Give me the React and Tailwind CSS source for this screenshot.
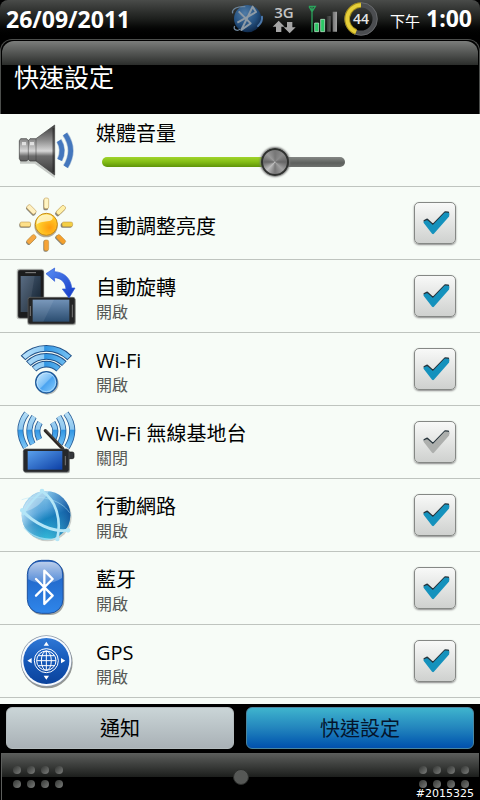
import { useState } from 'react';

function SpeakerIcon() {
  return (
    <svg viewBox="0 0 192 216" className="h-18 w-16" aria-hidden="true">
      <defs>
        <linearGradient id="cone" x1="0" y1="0" x2="0" y2="1">
          <stop offset="0" stopColor="#3c3c3c" />
          <stop offset="0.3" stopColor="#8b8b8b" />
          <stop offset="0.52" stopColor="#d8d8d8" />
          <stop offset="0.62" stopColor="#6c6c6c" />
          <stop offset="1" stopColor="#383838" />
        </linearGradient>
      </defs>
      <path d="M16 80L60 80L122 40V192L62 149H18Z" fill="#000" opacity="0.2" />
      <path d="M20 74H38L43 80L48 74H66L122 33V183L66 141H48L43 136L38 141H20L16 134V80Z" fill="url(#cone)" stroke="#3a3a3a" strokeWidth="2" />
      <path d="M24 84H36V94H24ZM48 84H60V94H48Z" fill="#f4f4f4" opacity="0.75" />
      <path d="M43 80V136M66 75V141" stroke="#333" strokeWidth="2" opacity="0.7" />
      <path d="M118 42V174" stroke="#222" strokeWidth="5" opacity="0.6" />
      <g fill="none">
        <path d="M135 80Q152 108 137 138" stroke="#a9bfd8" strokeWidth="18" />
        <path d="M153 60Q186 108 155 158" stroke="#a9bfd8" strokeWidth="18" />
        <path d="M135 80Q152 108 137 138" stroke="#4477bd" strokeWidth="14" />
        <path d="M153 60Q186 108 155 158" stroke="#4477bd" strokeWidth="14" />
      </g>
    </svg>
  );
}

const RAYS = [
  { x: 97, y: 50, turn: 0, fill: '#fff5c4' },
  { x: 140, y: 70, turn: 45, fill: '#fff0a8' },
  { x: 159, y: 112, turn: 90, fill: '#f4cf45' },
  { x: 140, y: 156, turn: 135, fill: '#f5a02c' },
  { x: 97, y: 174, turn: 180, fill: '#f6a335' },
  { x: 53, y: 156, turn: 225, fill: '#f5a743' },
  { x: 35, y: 112, turn: 270, fill: '#fde08a' },
  { x: 53, y: 68, turn: 315, fill: '#fff0c0' },
];

function SunIcon() {
  return (
    <svg viewBox="0 0 192 216" className="h-18 w-16" aria-hidden="true">
      <defs>
        <radialGradient id="sun" cx="0.65" cy="0.65" r="0.75">
          <stop offset="0" stopColor="#ff9c0c" />
          <stop offset="0.6" stopColor="#ffc827" />
          <stop offset="1" stopColor="#ffe95c" />
        </radialGradient>
      </defs>
      {RAYS.map((ray) => (
        <g key={ray.turn}>
          <rect x={ray.x - 9} y={ray.y - 14} width="14" height="34" rx="5" fill="#4b4336" opacity="0.65" transform={`rotate(${ray.turn} ${ray.x - 2} ${ray.y + 3})`} />
          <rect x={ray.x - 7} y={ray.y - 17} width="14" height="32" rx="5" fill={ray.fill} stroke="#b48a3d" strokeWidth="1.5" transform={`rotate(${ray.turn} ${ray.x} ${ray.y})`} />
        </g>
      ))}
      <circle cx="96" cy="116" r="35" fill="#6b5530" opacity="0.5" />
      <circle cx="97" cy="112" r="33" fill="url(#sun)" stroke="#c88a16" strokeWidth="3" />
      <path d="M68 112C66 88 86 80 104 83C120 86 120 98 106 102C90 104 80 104 68 112Z" fill="#fffbe0" opacity="0.75" />
    </svg>
  );
}

function RotateIcon() {
  return (
    <svg viewBox="0 0 192 216" className="h-18 w-16" aria-hidden="true">
      <defs>
        <linearGradient id="screen" x1="0" y1="0" x2="0" y2="1">
          <stop offset="0" stopColor="#6f90b6" />
          <stop offset="1" stopColor="#2b4d70" />
        </linearGradient>
        <linearGradient id="arrow" x1="0" y1="0" x2="1" y2="1">
          <stop offset="0" stopColor="#5a8ff5" />
          <stop offset="1" stopColor="#1238c4" />
        </linearGradient>
        <linearGradient id="darkscreen" x1="0" y1="0" x2="1" y2="1">
          <stop offset="0" stopColor="#4b6079" />
          <stop offset="1" stopColor="#0f1c29" />
        </linearGradient>
      </defs>
      <rect x="8" y="26" width="82" height="152" rx="6" fill="#000" opacity="0.2" />
      <rect x="12" y="30" width="77" height="144" rx="6" fill="#1b1c1d" stroke="#555" strokeWidth="2" />
      <rect x="20" y="48" width="60" height="108" fill="url(#darkscreen)" />
      <path d="M34 38H66" stroke="#888" strokeWidth="3" />
      <path d="M20 48H62L44 156H20Z" fill="#fff" opacity="0.08" />
      <rect x="40" y="116" width="146" height="80" rx="6" fill="#000" opacity="0.25" />
      <rect x="42" y="112" width="141" height="80" rx="6" fill="#242526" stroke="#6b6b68" strokeWidth="2" />
      <rect x="56" y="119" width="110" height="66" fill="url(#screen)" />
      <path d="M56 119H120L88 185H56Z" fill="#fff" opacity="0.08" />
      <path d="M49 138V168M175 134V172" stroke="#777" strokeWidth="3" />
      <path d="M96 41L122 24L121 35C150 36 171 56 173 84H183L165 114L145 87H156C154 67 142 54 121 53L122 64Z" fill="url(#arrow)" stroke="#2c58d4" strokeWidth="2" />
    </svg>
  );
}

function WifiIcon() {
  const arcs = ['M27 75A99 99 0 0 1 167 75', 'M43 92A77 77 0 0 1 151 92', 'M60 108A54 54 0 0 1 134 108'];
  return (
    <svg viewBox="0 0 192 216" className="h-18 w-16" aria-hidden="true">
      <defs>
        <linearGradient id="wave" gradientUnits="userSpaceOnUse" x1="20" y1="0" x2="170" y2="0">
          <stop offset="0" stopColor="#b9e2fb" />
          <stop offset="0.46" stopColor="#8fcbf5" />
          <stop offset="0.48" stopColor="#2f95e3" />
          <stop offset="1" stopColor="#79c4f4" />
        </linearGradient>
        <linearGradient id="ball" x1="0" y1="0" x2="1" y2="1">
          <stop offset="0" stopColor="#d5efff" />
          <stop offset="0.48" stopColor="#7cc0f7" />
          <stop offset="0.52" stopColor="#4aa3f0" />
          <stop offset="1" stopColor="#8fd3ff" />
        </linearGradient>
      </defs>
      <g fill="none">
        {arcs.map((d) => (
          <g key={d}>
            <path d={d} stroke="#1f4f86" strokeWidth="20" />
            <path d={d} pathLength="100" strokeDasharray="96 10" strokeDashoffset="-2" stroke="url(#wave)" strokeWidth="14" />
          </g>
        ))}
      </g>
      <circle cx="100" cy="151" r="34" fill="#000" opacity="0.25" />
      <circle cx="97" cy="148" r="32" fill="url(#ball)" stroke="#1f5a9a" strokeWidth="4" />
      <circle cx="97" cy="148" r="28" fill="none" stroke="#d3edff" strokeWidth="2" opacity="0.8" />
    </svg>
  );
}

function HotspotIcon() {
  const left = ['M38 22Q2 70 35 124', 'M60 32Q34 72 56 114', 'M78 50Q63 74 76 100'];
  return (
    <svg viewBox="0 0 192 216" className="h-18 w-16" aria-hidden="true">
      <defs>
        <linearGradient id="signal" gradientUnits="userSpaceOnUse" x1="0" y1="20" x2="0" y2="124">
          <stop offset="0" stopColor="#b5def6" />
          <stop offset="0.48" stopColor="#8cc6ef" />
          <stop offset="0.5" stopColor="#3096e4" />
          <stop offset="1" stopColor="#7cc5f5" />
        </linearGradient>
        <linearGradient id="hotscreen" x1="0" y1="0" x2="1" y2="1">
          <stop offset="0" stopColor="#5aa0ec" />
          <stop offset="1" stopColor="#0c3fa6" />
        </linearGradient>
      </defs>
      {['', 'matrix(-1 0 0 1 194 0)'].map((flip) => (
        <g key={flip} transform={flip || undefined} fill="none">
          {left.map((d) => (
            <g key={d}>
              <path d={d} stroke="#2a5f98" strokeWidth="18" />
              <path d={d} stroke="url(#signal)" strokeWidth="13" />
            </g>
          ))}
        </g>
      ))}
      <rect x="30" y="134" width="138" height="68" rx="7" fill="#000" opacity="0.3" />
      <rect x="154" y="138" width="26" height="20" rx="5" fill="#33363a" stroke="#111" strokeWidth="2" />
      <path d="M94 74L146 128" stroke="#2b2622" strokeWidth="10" strokeLinecap="round" />
      <path d="M96 73L148 126" stroke="#7b7670" strokeWidth="2" />
      <rect x="28" y="129" width="137" height="69" rx="7" fill="#26282b" stroke="#55585b" strokeWidth="2" />
      <rect x="41" y="135" width="104" height="56" fill="url(#hotscreen)" />
      <path d="M154 150V178" stroke="#777" strokeWidth="3" />
    </svg>
  );
}

function GlobeIcon() {
  return (
    <svg viewBox="0 0 192 216" className="h-18 w-16" aria-hidden="true">
      <defs>
        <linearGradient id="globe" x1="0.2" y1="0" x2="0.6" y2="1">
          <stop offset="0" stopColor="#a9dcf2" />
          <stop offset="0.42" stopColor="#5ba9dc" />
          <stop offset="0.6" stopColor="#1583bd" />
          <stop offset="1" stopColor="#39c6dd" />
        </linearGradient>
        <linearGradient id="globeshade" x1="0" y1="0" x2="1" y2="0">
          <stop offset="0" stopColor="#dff6ff" stopOpacity="0.6" />
          <stop offset="0.5" stopColor="#2f83c8" stopOpacity="0.1" />
          <stop offset="1" stopColor="#103f8c" stopOpacity="0.7" />
        </linearGradient>
      </defs>
      <circle cx="100" cy="114" r="73" fill="#000" opacity="0.18" />
      <circle cx="96" cy="109" r="73" fill="url(#globe)" />
      <circle cx="96" cy="109" r="73" fill="url(#globeshade)" />
      <path d="M30 84C48 46 76 34 104 36C92 66 64 92 30 98Z" fill="#fff" opacity="0.3" />
      <g fill="none" stroke="#b4e6f7" strokeLinecap="round">
        <path d="M24 94C60 134 116 160 162 154" strokeWidth="9" />
        <path d="M86 38C128 66 142 124 130 178" strokeWidth="8" />
        <path d="M84 38C56 62 38 84 28 106" strokeWidth="7" opacity="0.8" />
        <path d="M24 62C70 44 140 60 166 100" strokeWidth="3" opacity="0.5" />
        <path d="M30 146C54 176 96 186 128 178" strokeWidth="4" opacity="0.7" />
      </g>
      <g fill="#b4e6f7">
        <circle cx="84" cy="36" r="7" />
        <circle cx="25" cy="94" r="7" />
        <circle cx="162" cy="154" r="7" />
        <circle cx="130" cy="180" r="7" />
      </g>
    </svg>
  );
}

function BluetoothIcon() {
  return (
    <svg viewBox="0 0 192 216" className="h-18 w-16" aria-hidden="true">
      <defs>
        <linearGradient id="bt" x1="0" y1="0" x2="0" y2="1">
          <stop offset="0" stopColor="#1d5cbd" />
          <stop offset="1" stopColor="#2f86ea" />
        </linearGradient>
        <linearGradient id="btgloss" x1="0" y1="0" x2="0" y2="1">
          <stop offset="0" stopColor="#fff" stopOpacity="0.7" />
          <stop offset="1" stopColor="#fff" stopOpacity="0.2" />
        </linearGradient>
      </defs>
      <rect x="43" y="29" width="108" height="160" rx="42" fill="#000" opacity="0.35" />
      <rect x="40" y="25" width="107" height="159" rx="42" fill="url(#bt)" stroke="#1e519e" strokeWidth="3" />
      <path d="M43 82V66C43 42 60 29 82 29H105C128 29 144 42 144 66V78C118 98 72 100 43 82Z" fill="url(#btgloss)" />
      <path d="M66 81L116 131L91 156V56L116 81L66 131" fill="none" stroke="#fff" strokeWidth="7" strokeLinejoin="round" strokeLinecap="round" />
    </svg>
  );
}

function GpsIcon() {
  return (
    <svg viewBox="0 0 192 216" className="h-18 w-16" aria-hidden="true">
      <defs>
        <linearGradient id="gps" x1="0" y1="0" x2="0" y2="1">
          <stop offset="0" stopColor="#2f78d6" />
          <stop offset="0.5" stopColor="#1558b8" />
          <stop offset="1" stopColor="#0b439c" />
        </linearGradient>
      </defs>
      <circle cx="99" cy="113" r="77" fill="#000" opacity="0.4" />
      <circle cx="97" cy="108" r="77" fill="#8b98a8" />
      <circle cx="97" cy="108" r="75" fill="#f6faff" />
      <circle cx="97" cy="108" r="69" fill="url(#gps)" />
      <g fill="none" stroke="#fff" strokeWidth="3">
        <circle cx="97" cy="107" r="36" />
        <circle cx="97" cy="107" r="29" />
        <ellipse cx="97" cy="107" rx="15" ry="29" />
        <path d="M97 78V136M68 107H126M73 92H121M73 122H121" />
      </g>
      <path d="M97 50L105 62H89ZM97 164L105 152H89ZM40 107L53 99V115ZM154 107L141 99V115Z" fill="#fff" />
    </svg>
  );
}

const SETTINGS = [
  { id: 'brightness', title: '自動調整亮度', Icon: SunIcon, on: true },
  { id: 'rotate', title: '自動旋轉', status: '開啟', Icon: RotateIcon, on: true },
  { id: 'wifi', title: 'Wi-Fi', status: '開啟', Icon: WifiIcon, on: true },
  { id: 'hotspot', title: 'Wi-Fi 無線基地台', status: '關閉', Icon: HotspotIcon, on: false },
  { id: 'mobile', title: '行動網路', status: '開啟', Icon: GlobeIcon, on: true },
  { id: 'bluetooth', title: '藍牙', status: '開啟', Icon: BluetoothIcon, on: true },
  { id: 'gps', title: 'GPS', status: '開啟', Icon: GpsIcon, on: true },
];

function StatusBar() {
  return (
    <header className="flex h-[38px] items-center justify-between rounded-t-lg bg-linear-to-b from-[#4a4c4a] via-[#1d1f1d] to-black pl-1.5 pr-2 text-white">
      <time className="text-[23px] leading-7 font-bold">26/09/2011</time>
      <div className="flex items-center">
        <svg viewBox="0 0 102 90" className="mr-2 h-[30px] w-[34px]" aria-hidden="true">
          <defs>
            <radialGradient id="btball" cx="0.4" cy="0.3" r="0.75">
              <stop offset="0" stopColor="#4f7ba6" />
              <stop offset="0.6" stopColor="#24507f" />
              <stop offset="1" stopColor="#0c2444" />
            </radialGradient>
          </defs>
          <circle cx="53" cy="44" r="41" fill="url(#btball)" />
          <path d="M26 22L62 58L34 78L68 8L78 24L22 56" fill="none" stroke="#8d9aa5" strokeWidth="6" strokeLinejoin="round" />
          <path d="M8 28C4 14 24 6 46 8M14 66C8 78 22 82 30 76" fill="none" stroke="#6f879d" strokeWidth="4" />
          <path d="M96 38Q98 54 84 66" fill="none" stroke="#4a76a8" strokeWidth="6" strokeLinecap="round" />
        </svg>
        <div className="mr-3 flex w-6 flex-col items-center">
          <span className="text-[15px] leading-4 font-semibold text-[#c4c4c4]">3G</span>
          <svg viewBox="0 0 72 42" className="h-3.5 w-6" fill="#a5a5a5" aria-hidden="true">
            <path d="M20 2L38 20H28V36H12V20H2ZM53 40L35 22H45V6H61V22H71Z" />
          </svg>
        </div>
        <svg viewBox="0 0 90 84" className="mr-1.5 h-7 w-[30px]" aria-hidden="true">
          <defs>
            <linearGradient id="bar" x1="0" y1="0" x2="1" y2="0">
              <stop offset="0" stopColor="#2f302f" />
              <stop offset="1" stopColor="#a3a3a3" />
            </linearGradient>
          </defs>
          <path d="M3 4L12 20L22 4H3M12 4V82" fill="none" stroke="#2ba35c" strokeWidth="4" />
          <path d="M20 54H32V80H20ZM38 43H50V80H38Z" fill="#2bc765" stroke="#d2f5dd" strokeWidth="2" />
          <path d="M56 33H68V80H56ZM74 20H87V80H74Z" fill="url(#bar)" />
        </svg>
        <div className="mr-3 grid size-[34px] place-items-center">
          <svg viewBox="0 0 102 102" className="col-start-1 row-start-1 size-[34px]" fill="none" aria-hidden="true">
            <circle cx="51" cy="51" r="42" stroke="#4b4d50" strokeWidth="15" />
            <circle cx="51" cy="51" r="49" stroke="#77797c" strokeWidth="2" />
            <path d="M51 9A42 42 0 0 0 36 90" stroke="#a08a18" strokeWidth="17" />
            <path d="M51 9A42 42 0 0 0 36 90" stroke="#e6cf3a" strokeWidth="11" />
          </svg>
          <span className="col-start-1 row-start-1 text-[14px] leading-4 font-semibold text-[#e4e4e4]">44</span>
        </div>
        <time className="flex items-baseline gap-1.5">
          <span className="text-[15px] leading-7">下午</span>
          <span className="text-[23px] leading-7 font-bold">1:00</span>
        </time>
      </div>
    </header>
  );
}

function VolumeRow() {
  const [volume, setVolume] = useState(74);
  // the thumb is 28px wide, so the fill only has to end somewhere under it
  return (
    <li className="flex h-[73px] items-center border-b border-[#bfc4bf] pl-3.5">
      <SpeakerIcon />
      <div className="ml-[18px] flex flex-col">
        <label htmlFor="volume" className="text-[20px] leading-6">媒體音量</label>
        <input
          id="volume"
          type="range"
          min="0"
          max="100"
          value={volume}
          onChange={(e) => setVolume(Number(e.target.value))}
          style={{ '--fill': `${volume}%` }}
          className="ml-1.5 h-8 w-[243px] appearance-none bg-transparent [&::-webkit-slider-runnable-track]:h-2.5 [&::-webkit-slider-runnable-track]:rounded-full [&::-webkit-slider-runnable-track]:bg-[linear-gradient(#a0d42c,#83bd15_50%,#5f9409),linear-gradient(#858885,#5d605d_60%,#6e716e)] [&::-webkit-slider-runnable-track]:bg-[length:var(--fill)_100%,100%_100%] [&::-webkit-slider-runnable-track]:bg-no-repeat [&::-webkit-slider-thumb]:-mt-[9px] [&::-webkit-slider-thumb]:size-7 [&::-webkit-slider-thumb]:appearance-none [&::-webkit-slider-thumb]:rounded-full [&::-webkit-slider-thumb]:border-2 [&::-webkit-slider-thumb]:border-[#303230] [&::-webkit-slider-thumb]:bg-[conic-gradient(#777,#8a8a8a,#666,#a0a0a0,#777,#bdbdbd,#666,#999,#777)] [&::-webkit-slider-thumb]:shadow-[0_0_2px_1px_#777]"
        />
      </div>
    </li>
  );
}

function SettingRow({ id, title, status, Icon, on }) {
  const [checked, setChecked] = useState(on);
  return (
    <li className="flex h-[73px] items-center border-b border-[#bfc4bf] pr-6 pl-3.5">
      <Icon />
      <label htmlFor={id} className="ml-[18px] flex flex-1 flex-col pt-2">
        <span className="text-[20px] leading-6">{title}</span>
        {status && <span className="text-[16px] leading-6 text-[#555855]">{status}</span>}
      </label>
      <div className="grid">
        <input
          id={id}
          type="checkbox"
          checked={checked}
          onChange={() => setChecked(!checked)}
          className="peer col-start-1 row-start-1 size-[42px] appearance-none rounded-[5px] border border-[#858885] bg-linear-to-b from-[#f8f9f8] to-[#cfd1cf] shadow-[0_1px_2px_#888]"
        />
        <svg viewBox="0 0 126 126" className="pointer-events-none col-start-1 row-start-1 size-[42px] text-[#adafad] peer-checked:text-[#1592bd]" strokeLinejoin="round" aria-hidden="true">
          <path d="M32 57L39 53L57 69L94 31L102 32V38L57 88Z" fill="#26333b" stroke="#26333b" strokeWidth="7" />
          <path d="M32 61L39 58L57 74L94 35L102 36V42L57 93Z" fill="currentColor" stroke="currentColor" strokeWidth="7" />
        </svg>
      </div>
    </li>
  );
}

function GripDots() {
  return (
    <div className="grid w-fit grid-cols-4 gap-x-1.5 gap-y-1.5">
      {[0, 1, 2, 3, 4, 5, 6, 7].map((n) => (
        <span key={n} className="size-2 rounded-full bg-linear-to-br from-[#343634] to-[#7c7e7c]" />
      ))}
    </div>
  );
}

export default function App() {
  return (
    <div className="flex min-h-screen flex-col bg-black font-['Open_Sans','Noto_Sans_CJK_TC',sans-serif] text-black">
      <StatusBar />
      <div className="mt-px rounded-t-xl border border-b-0 border-[#4c4e4c] px-px pt-px">
        <div className="h-[73px] rounded-t-xl bg-[linear-gradient(#7b7d7b,#2b2d2b_24px,#000_24px)] px-3 pt-4">
          <h1 className="text-[25px] leading-10 text-white">快速設定</h1>
        </div>
      </div>
      <main className="flex-1 bg-[#f7fcf7]">
        <ul>
          <VolumeRow />
          {SETTINGS.map((item) => (
            <SettingRow key={item.id} {...item} />
          ))}
        </ul>
      </main>
      <nav className="grid grid-cols-2 gap-3 px-1.5 pt-[3px] pb-1">
        <button type="button" className="h-[42px] rounded-md border border-[#b4bcbe] bg-linear-to-b from-[#cad5d7] to-[#a9b1b6] pt-0.5 text-[20px] leading-6">通知</button>
        <button type="button" className="h-[42px] rounded-md border border-[#4a86a0] bg-linear-to-b from-[#3fb4cd] via-[#2385bd] to-[#0350ad] pt-0.5 text-[20px] leading-6 text-[#04142c]">快速設定</button>
      </nav>
      <footer className="mx-px grid h-[47px] grid-cols-[1fr_auto_1fr] border-t border-l border-[#5c5e5c] bg-[linear-gradient(#5a5c5a,#1c1e1c_23px,#000_23px)]">
        <div className="pt-3 pl-[11px]">
          <GripDots />
        </div>
        <span className="mt-[15px] size-4 rounded-full border border-[#2c2e2c] bg-[#565856]" />
        <div className="flex flex-col items-end pt-3 pr-1">
          <div className="pr-1.5">
            <GripDots />
          </div>
          <span className="pr-px font-['DejaVu_Sans'] text-[11px] leading-3 text-white">#2015325</span>
        </div>
      </footer>
    </div>
  );
}
